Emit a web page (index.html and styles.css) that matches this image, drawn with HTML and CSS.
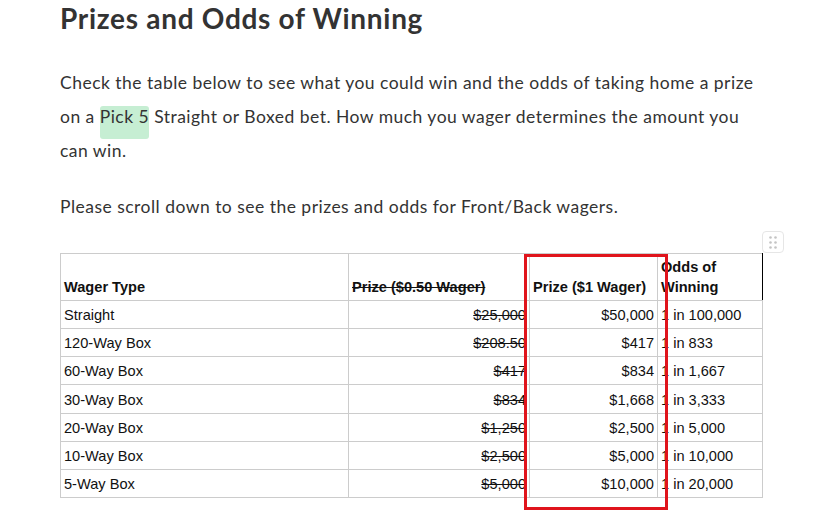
FILE: index.html
```html
<!DOCTYPE html>
<html lang="en">
<head>
<meta charset="utf-8">
<title>Prizes and Odds of Winning</title>
<link rel="stylesheet" href="styles.css">
</head>
<body>
<main class="content">
  <h1 class="title">Prizes and Odds of Winning</h1>
  <p class="text">Check the table below to see what you could win and the odds of taking home a prize on a <span class="hl">Pick 5</span> Straight or Boxed bet. How much you wager determines the amount you can win.</p>
  <p class="text">Please scroll down to see the prizes and odds for Front/Back wagers.</p>
  <div class="table-wrap">
    <span class="handle" aria-hidden="true">
      <svg width="10" height="14" viewBox="0 0 10 14"><g fill="#c4c4c4"><circle cx="2.5" cy="2.5" r="1.3"/><circle cx="7.5" cy="2.5" r="1.3"/><circle cx="2.5" cy="7.5" r="1.3"/><circle cx="7.5" cy="7.5" r="1.3"/><circle cx="2.5" cy="12.5" r="1.3"/><circle cx="7.5" cy="12.5" r="1.3"/></g></svg>
    </span>
    <table class="prizes">
      <colgroup>
        <col class="c1"><col class="c2"><col class="c3"><col class="c4">
      </colgroup>
      <thead>
        <tr>
          <th>Wager Type</th>
          <th class="old">Prize ($0.50 Wager)</th>
          <th>Prize ($1 Wager)</th>
          <th class="last">Odds of Winning</th>
        </tr>
      </thead>
      <tbody>
        <tr><td>Straight</td><td class="num old">$25,000</td><td class="num">$50,000</td><td>1 in 100,000</td></tr>
        <tr><td>120-Way Box</td><td class="num old">$208.50</td><td class="num">$417</td><td>1 in 833</td></tr>
        <tr><td>60-Way Box</td><td class="num old">$417</td><td class="num">$834</td><td>1 in 1,667</td></tr>
        <tr class="tall"><td>30-Way Box</td><td class="num old">$834</td><td class="num">$1,668</td><td>1 in 3,333</td></tr>
        <tr><td>20-Way Box</td><td class="num old">$1,250</td><td class="num">$2,500</td><td>1 in 5,000</td></tr>
        <tr><td>10-Way Box</td><td class="num old">$2,500</td><td class="num">$5,000</td><td>1 in 10,000</td></tr>
        <tr><td>5-Way Box</td><td class="num old">$5,000</td><td class="num">$10,000</td><td>1 in 20,000</td></tr>
      </tbody>
    </table>
    <div class="mark" aria-hidden="true"></div>
  </div>
</main>
</body>
</html>
```
FILE: styles.css
```css
html, body {
  margin: 0;
  padding: 0;
  background: #ffffff;
}

.content {
  padding: 0 61px 40px 60px;
  font-family: Lato, "Open Sans", sans-serif;
  color: #333333;
}

.title {
  margin: 0 0 30px;
  font-size: 28px;
  line-height: 36px;
  font-weight: 700;
  letter-spacing: 0.7px;
  color: #333333;
}

.text {
  margin: 0 0 22px;
  font-size: 17.5px;
  line-height: 34px;
  letter-spacing: 0.48px;
}

.hl {
  background: #c6eed3;
  border-radius: 3px;
  padding-bottom: 12px;
}

.table-wrap {
  position: relative;
  margin-top: 29px;
  width: 702px;
}

.prizes {
  width: 702px;
  table-layout: fixed;
  border-collapse: collapse;
  font-family: "Liberation Sans", Arial, sans-serif;
  font-size: 14.6px;
  line-height: 20px;
  color: #111111;
}

.c1 { width: 288px; }
.c2 { width: 181px; }
.c3 { width: 128px; }
.c4 { width: 105px; }

.prizes th,
.prizes td {
  border: 1px solid #cccccc;
  padding: 4px 3px 3px;
  text-align: left;
  white-space: nowrap;
  overflow: hidden;
}

.prizes th {
  padding-top: 3px;
  font-weight: 700;
  vertical-align: bottom;
  white-space: normal;
}

.prizes th.last {
  border-right-color: #000000;
}

.prizes td.num {
  text-align: right;
}

.prizes .old {
  text-decoration: line-through;
}

.prizes tr.tall td {
  padding-top: 5px;
}

.mark {
  position: absolute;
  left: 464px;
  top: 1px;
  width: 144px;
  height: 256px;
  box-sizing: border-box;
  border: 3px solid #e0141c;
  z-index: 2;
}

.handle {
  position: absolute;
  left: 702px;
  top: -22px;
  width: 22px;
  height: 22px;
  box-sizing: border-box;
  border: 1px solid #e6e6e6;
  border-radius: 4px;
  background: #ffffff;
  display: flex;
  align-items: center;
  justify-content: center;
}

.handle svg {
  display: block;
}
```
